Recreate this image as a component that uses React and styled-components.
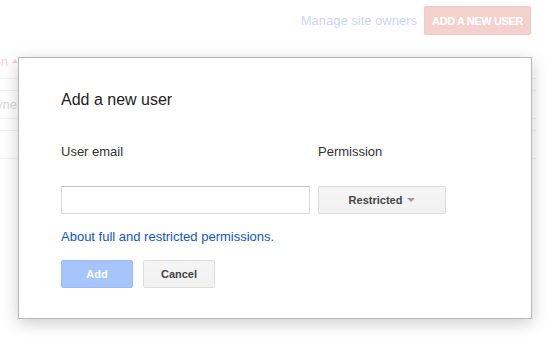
import React from "react";
import styled, { createGlobalStyle } from "styled-components";

const GlobalStyle = createGlobalStyle`
  html, body {
    margin: 0;
    padding: 0;
    background: #fff;
  }
  body {
    font-family: "Liberation Sans", Arial, sans-serif;
    font-size: 13px;
    color: #222;
  }
`;

const Page = styled.div`
  position: relative;
  width: 549px;
  height: 339px;
  overflow: hidden;
  background: #fff;
`;

const TopBar = styled.div`
  display: flex;
  justify-content: flex-end;
  align-items: center;
  gap: 7px;
  padding: 6px 18px 0 0;
`;

const OwnersLink = styled.a`
  color: #2a4fd8;
  font-size: 13px;
  text-decoration: none;
`;

const RedButton = styled.button`
  box-sizing: border-box;
  width: 107px;
  height: 29px;
  border: 1px solid #b0281a;
  border-radius: 2px;
  background: #d14836;
  color: #fff;
  font-family: inherit;
  font-size: 11px;
  font-weight: bold;
  letter-spacing: -0.4px;
  padding: 0;
`;

const Table = styled.div`
  margin: 13px 0 0 -62px;
  width: 598px;
`;

const HeadRow = styled.div`
  display: flex;
  align-items: center;
  height: 26px;
  padding-bottom: 4px;
  border-bottom: 1px solid #ccc;
`;

const SortHead = styled.span`
  display: flex;
  align-items: center;
  justify-content: flex-end;
  gap: 4px;
  width: 80px;
  color: #dd4b39;
  font-size: 13px;
  white-space: nowrap;
`;

const SortArrow = styled.span`
  width: 0;
  height: 0;
  border-left: 3px solid transparent;
  border-right: 3px solid transparent;
  border-bottom: 4px solid #dd4b39;
`;

const Row = styled.div`
  display: flex;
  align-items: center;
  height: 27px;
  margin-top: 11px;
  border-top: 1px solid #ccc;
  border-bottom: 1px solid #ccc;
`;

const Cell = styled.span`
  width: 79px;
  text-align: right;
  color: #666;
  font-size: 13px;
`;

const Overlay = styled.div`
  position: absolute;
  inset: 0;
  background: rgba(255, 255, 255, 0.75);
`;

const Dialog = styled.div`
  position: absolute;
  left: 18px;
  top: 57px;
  box-sizing: border-box;
  width: 514px;
  padding: 32px 42px 30px;
  background: #fff;
  border: 1px solid #b8b8b8;
  box-shadow: 0 4px 16px rgba(0, 0, 0, 0.2);
`;

const Title = styled.h2`
  margin: 0;
  font-size: 16px;
  line-height: 20px;
  font-weight: normal;
  color: #222;
`;

const Fields = styled.div`
  display: grid;
  grid-template-columns: 249px 128px;
  column-gap: 8px;
  row-gap: 26px;
  margin-top: 34px;
`;

const Label = styled.label`
  font-size: 13px;
  line-height: 16px;
  color: #333;
`;

const EmailInput = styled.input`
  box-sizing: border-box;
  width: 249px;
  height: 28px;
  margin: 0;
  padding: 0 8px;
  border: 1px solid #d9d9d9;
  border-top-color: #c0c0c0;
  border-radius: 1px;
  background: #fff;
  font-family: inherit;
  font-size: 13px;
  outline: none;
`;

const GreyButton = styled.button`
  box-sizing: border-box;
  display: flex;
  align-items: center;
  justify-content: center;
  gap: 5px;
  width: ${(p) => p.$width}px;
  height: 28px;
  margin: 0;
  padding: 0;
  border: 1px solid #dcdcdc;
  border-radius: 2px;
  background: linear-gradient(#f5f5f5, #f1f1f1);
  color: #444;
  font-family: inherit;
  font-size: 11px;
  font-weight: bold;
`;

const Caret = styled.span`
  width: 0;
  height: 0;
  border-left: 4px solid transparent;
  border-right: 4px solid transparent;
  border-top: 4px solid #999;
`;

const HelpLink = styled.a`
  display: block;
  margin-top: 15px;
  font-size: 13px;
  line-height: 16px;
  color: #15c;
  text-decoration: none;
`;

const Actions = styled.div`
  display: flex;
  gap: 10px;
  margin-top: 15px;
`;

const AddButton = styled.button`
  box-sizing: border-box;
  width: 72px;
  height: 28px;
  margin: 0;
  padding: 0;
  border: 1px solid #98bcf6;
  border-radius: 2px;
  background: #a6c6fb;
  color: #fff;
  font-family: inherit;
  font-size: 11px;
  font-weight: bold;
`;

export default function App() {
  return (
    <>
      <GlobalStyle />
      <Page>
        <TopBar>
          <OwnersLink href="#">Manage site owners</OwnersLink>
          <RedButton>ADD A NEW USER</RedButton>
        </TopBar>
        <Table>
          <HeadRow>
            <SortHead>
              Permission
              <SortArrow />
            </SortHead>
          </HeadRow>
          <Row>
            <Cell>Wayne</Cell>
          </Row>
          <Row />
        </Table>
        <Overlay />
        <Dialog>
          <Title>Add a new user</Title>
          <Fields>
            <Label>User email</Label>
            <Label>Permission</Label>
            <EmailInput type="text" />
            <GreyButton $width={128}>
              Restricted
              <Caret />
            </GreyButton>
          </Fields>
          <HelpLink href="#">About full and restricted permissions.</HelpLink>
          <Actions>
            <AddButton disabled>Add</AddButton>
            <GreyButton $width={72}>Cancel</GreyButton>
          </Actions>
        </Dialog>
      </Page>
    </>
  );
}
